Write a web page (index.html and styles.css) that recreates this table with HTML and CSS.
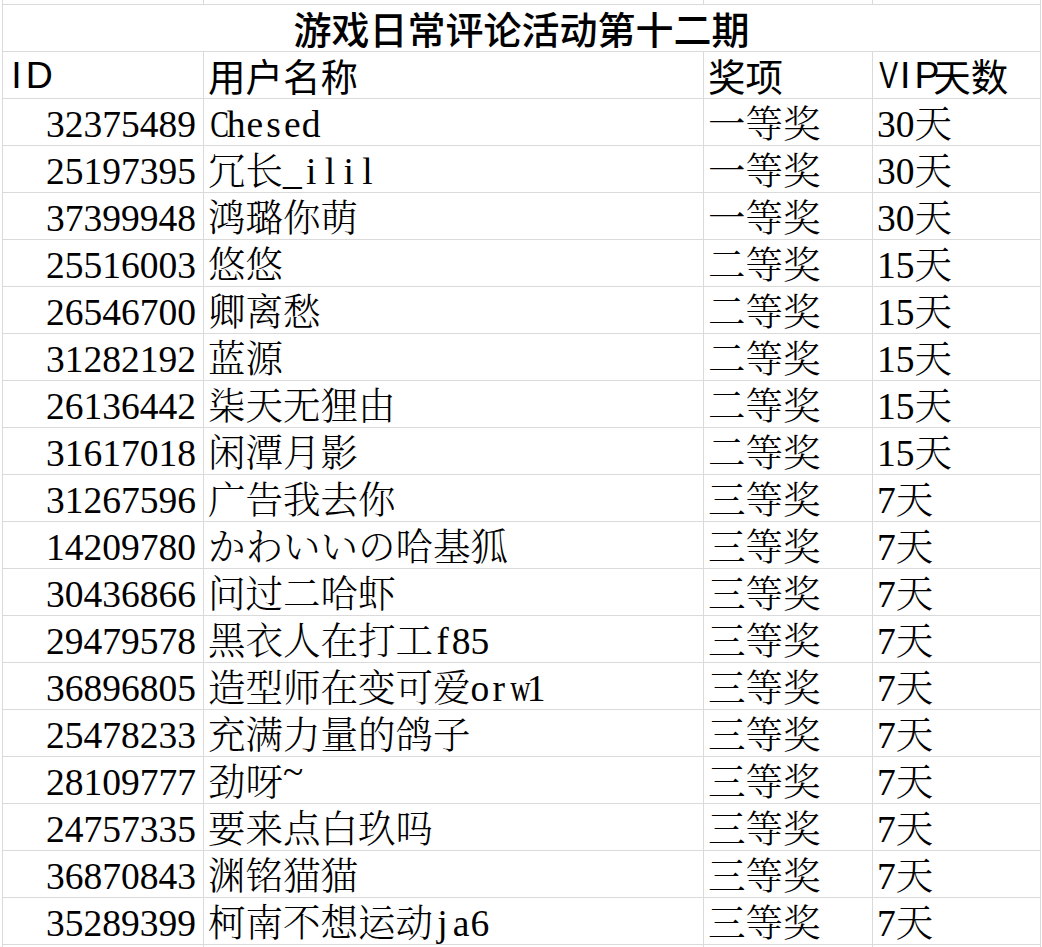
FILE: index.html
```html
<!DOCTYPE html>
<html lang="zh-CN">
<head>
<meta charset="utf-8">
<title>游戏日常评论活动第十二期</title>
<link rel="stylesheet" href="styles.css">
</head>
<body>
<div class="sheet">
  <div class="c edge"></div><div class="c edge"></div><div class="c edge"></div><div class="c edge"></div>

  <div class="c title">游戏日常评论活动第十二期</div>

  <div class="c hd"><span class="m">I</span><span class="m">D</span></div>
  <div class="c hd">用户名称</div>
  <div class="c hd">奖项</div>
  <div class="c hd"><span class="m w">V</span><span class="m">I</span><span class="m">P</span>天数</div>

  <div class="c id">32375489</div><div class="c t"><span class="m w">C</span><span class="m">h</span><span class="m">e</span><span class="m">s</span><span class="m">e</span><span class="m">d</span></div><div class="c t">一等奖</div><div class="c t"><span class="d">30</span>天</div>
  <div class="c id">25197395</div><div class="c t">冗长<span class="m">_</span><span class="m">i</span><span class="m">l</span><span class="m">i</span><span class="m">l</span></div><div class="c t">一等奖</div><div class="c t"><span class="d">30</span>天</div>
  <div class="c id">37399948</div><div class="c t">鸿璐你萌</div><div class="c t">一等奖</div><div class="c t"><span class="d">30</span>天</div>
  <div class="c id">25516003</div><div class="c t">悠悠</div><div class="c t">二等奖</div><div class="c t"><span class="d">15</span>天</div>
  <div class="c id">26546700</div><div class="c t">卿离愁</div><div class="c t">二等奖</div><div class="c t"><span class="d">15</span>天</div>
  <div class="c id">31282192</div><div class="c t">蓝源</div><div class="c t">二等奖</div><div class="c t"><span class="d">15</span>天</div>
  <div class="c id">26136442</div><div class="c t">柒天无狸由</div><div class="c t">二等奖</div><div class="c t"><span class="d">15</span>天</div>
  <div class="c id">31617018</div><div class="c t">闲潭月影</div><div class="c t">二等奖</div><div class="c t"><span class="d">15</span>天</div>
  <div class="c id">31267596</div><div class="c t">广告我去你</div><div class="c t">三等奖</div><div class="c t"><span class="d">7</span>天</div>
  <div class="c id">14209780</div><div class="c t">かわいいの哈基狐</div><div class="c t">三等奖</div><div class="c t"><span class="d">7</span>天</div>
  <div class="c id">30436866</div><div class="c t">问过二哈虾</div><div class="c t">三等奖</div><div class="c t"><span class="d">7</span>天</div>
  <div class="c id">29479578</div><div class="c t">黑衣人在打工<span class="m">f</span><span class="m">8</span><span class="m">5</span></div><div class="c t">三等奖</div><div class="c t"><span class="d">7</span>天</div>
  <div class="c id">36896805</div><div class="c t">造型师在变可爱<span class="m">o</span><span class="m">r</span><span class="m w">w</span><span class="m">1</span></div><div class="c t">三等奖</div><div class="c t"><span class="d">7</span>天</div>
  <div class="c id">25478233</div><div class="c t">充满力量的鸽子</div><div class="c t">三等奖</div><div class="c t"><span class="d">7</span>天</div>
  <div class="c id">28109777</div><div class="c t">劲呀<span class="m tilde">~</span></div><div class="c t">三等奖</div><div class="c t"><span class="d">7</span>天</div>
  <div class="c id">24757335</div><div class="c t">要来点白玖吗</div><div class="c t">三等奖</div><div class="c t"><span class="d">7</span>天</div>
  <div class="c id">36870843</div><div class="c t">渊铭猫猫</div><div class="c t">三等奖</div><div class="c t"><span class="d">7</span>天</div>
  <div class="c id">35289399</div><div class="c t">柯南不想运动<span class="m">j</span><span class="m">a</span><span class="m">6</span></div><div class="c t">三等奖</div><div class="c t"><span class="d">7</span>天</div>

  <div class="c edge"></div><div class="c edge"></div><div class="c edge"></div><div class="c edge"></div>
</div>
</body>
</html>
```

FILE: styles.css
```css
html, body {
  margin: 0;
  padding: 0;
  background: #ffffff;
  overflow: hidden;
}

.sheet {
  display: grid;
  grid-template-columns: 200px 499px 168px 167px;
  grid-template-rows: 4px repeat(20, 46px) 10px;
  gap: 1px;
  padding: 0 1px;
  margin-left: 2px;
  width: max-content;
  background: #dadada;
}

.c {
  background: #ffffff;
  display: flex;
  align-items: flex-end;
  box-sizing: border-box;
  padding: 0 4px 1px 4px;
  font-size: 37.5px;
  line-height: 38px;
  color: #000000;
  white-space: nowrap;
  overflow: hidden;
}

.edge {
  padding: 0;
}

.title {
  grid-column: 1 / -1;
  justify-content: center;
  font-family: "Noto Sans CJK SC", sans-serif;
  font-size: 38px;
  font-weight: 500;
  padding-bottom: 4px;
}

.hd {
  font-family: "Noto Sans CJK SC", sans-serif;
  font-weight: 400;
  padding-bottom: 4px;
}

.id {
  justify-content: flex-end;
  padding-right: 7px;
  font-family: "Liberation Serif", serif;
}

.t {
  font-family: "Liberation Serif", "Noto Serif CJK SC", "Noto Sans CJK SC", serif;
  font-weight: 300;
}

.d {
  font-family: "Liberation Serif", serif;
  font-weight: 400;
}

.m {
  display: inline-block;
  width: 0.5em;
  text-align: center;
}

.t .m {
  font-family: "Liberation Serif", serif;
  font-weight: 400;
}

.m.w {
  transform: scaleX(0.75);
}

.t .tilde {
  transform: translateY(-0.3em);
}

.hd .m {
  font-family: "Liberation Sans", sans-serif;
}
```
